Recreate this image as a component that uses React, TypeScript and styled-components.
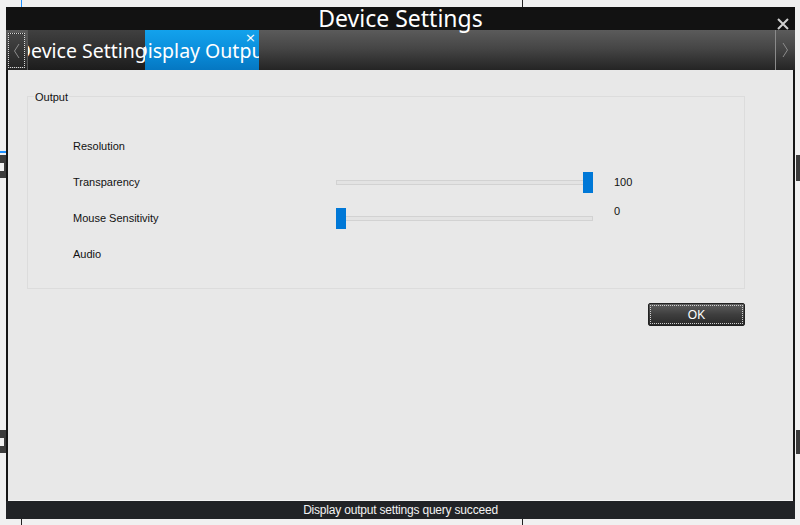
import styled, { createGlobalStyle } from 'styled-components'

const GlobalStyle = createGlobalStyle`
  html, body {
    margin: 0;
    padding: 0;
    background: #f0f0f0;
  }
`

// 창 뒤에 깔린 바탕
const Desktop = styled.div`
  position: relative;
  width: 800px;
  height: 525px;
  box-sizing: border-box;
  padding: 7px 5px 6px 6px;
  background: #f0f0f0;
  overflow: hidden;
  font-family: 'Liberation Sans', Arial, sans-serif;
`

// 뒤쪽 창의 조각들 (가장자리에 살짝 보임)
const Edge = styled.div<{ $x: number; $y: number; $w: number; $h: number; $c: string }>`
  position: absolute;
  left: ${(p) => p.$x}px;
  top: ${(p) => p.$y}px;
  width: ${(p) => p.$w}px;
  height: ${(p) => p.$h}px;
  background: ${(p) => p.$c};
`

const SideTab = styled.div<{ $y: number }>`
  position: absolute;
  left: 0;
  top: ${(p) => p.$y}px;
  width: 6px;
  height: 23px;
  background: #3c3c3c;
  display: flex;
  align-items: center;
  &::after {
    content: '';
    width: 4px;
    height: 8px;
    background: #f2f2f2;
  }
`

const Window = styled.div`
  position: relative;
  height: 512px;
  display: flex;
  flex-direction: column;
  background: #161616;
`

const TitleBar = styled.div`
  height: 23px;
  flex-shrink: 0;
  position: relative;
  display: flex;
  justify-content: center;
  align-items: flex-end;
  background: #121212;
  color: #fff;
  font-family: 'Noto Sans', 'Open Sans', sans-serif;
  font-size: 23px;
  line-height: 23px;
`

const CloseButton = styled.div`
  position: absolute;
  right: 5px;
  top: 4px;
  width: 14px;
  height: 14px;
`

const TabBar = styled.div`
  height: 40px;
  flex-shrink: 0;
  display: flex;
  background: linear-gradient(#5b5b5b, #464646 45%, #242424);
`

const NavButton = styled.div<{ $side: 'left' | 'right' }>`
  display: flex;
  align-items: center;
  justify-content: center;
  box-sizing: border-box;
  ${(p) =>
    p.$side === 'left'
      ? `
    margin: 3px 0 2px 2px;
    width: 17px;
    border: 1px dotted #d8d8d8;
    background: linear-gradient(#454545, #262626);
  `
      : `
    border-left: 1px solid #8a8a8a;
    width: 20px;
  `}
`

const Tab = styled.div<{ $active?: boolean }>`
  position: relative;
  width: ${(p) => (p.$active ? 114 : 117)}px;
  margin-left: ${(p) => (p.$active ? 0 : 2)}px;
  display: flex;
  align-items: center;
  justify-content: center;
  overflow: hidden;
  white-space: nowrap;
  color: #fff;
  font-family: 'Noto Sans', 'Open Sans', sans-serif;
  font-size: 19.5px;
  background: ${(p) =>
    p.$active
      ? 'linear-gradient(#13a2ec, #0a8fdc 50%, #0577c2)'
      : 'linear-gradient(#404040, #2f2f2f 50%, #1c1c1c)'};
  border-left: ${(p) => (p.$active ? 'none' : '1px solid #555')};
`

const TabClose = styled.span`
  position: absolute;
  top: 1px;
  right: 3px;
  font-size: 13px;
  line-height: 13px;
  font-family: 'DejaVu Sans', sans-serif;
`

const Filler = styled.div`
  flex: 1;
`

const Content = styled.div`
  flex: 1;
  display: flex;
  flex-direction: column;
  align-items: flex-start;
  margin: 0 2px 0 2px;
  padding: 26px 0 0 19px;
  background: #e8e8e8;
  border-bottom: 1px solid #f4f4f4;
`

const GroupBox = styled.fieldset`
  position: relative;
  width: 718px;
  height: 193px;
  box-sizing: border-box;
  margin: 0;
  padding: 31px 0 0 45px;
  border: 1px solid #dcdcdc;
  display: grid;
  grid-template-columns: 242px 257px auto;
  grid-auto-rows: 36px;
  column-gap: 21px;
  align-content: start;
`

const GroupTitle = styled.legend`
  position: absolute;
  top: -6px;
  left: 6px;
  padding: 0 1px;
  background: #e8e8e8;
  font-size: 11px;
  color: #111;
`

const Label = styled.div`
  display: flex;
  align-items: center;
  font-size: 11px;
  color: #111;
`

const SliderCell = styled.div`
  position: relative;
  display: flex;
  align-items: center;
`

const Track = styled.div`
  width: 100%;
  height: 5px;
  box-sizing: border-box;
  background: #e3e3e3;
  border: 1px solid #d2d2d2;
`

const Thumb = styled.div`
  position: absolute;
  top: 50%;
  width: 10px;
  height: 21px;
  margin-top: -10px;
  background: #0078d7;
`

const Value = styled.div<{ $lift?: number }>`
  display: flex;
  align-items: center;
  font-size: 11px;
  color: #111;
  position: relative;
  top: ${(p) => -(p.$lift || 0)}px;
`

const Empty = styled.div``

const ButtonRow = styled.div`
  width: 718px;
  display: flex;
  justify-content: flex-end;
  margin-top: 14px;
`

const OkButton = styled.button`
  width: 97px;
  height: 23px;
  padding: 0;
  border: 1px solid #222;
  border-radius: 2px;
  background: linear-gradient(#5e5e5e, #3e3e3e 50%, #2a2a2a);
  color: #fff;
  font-family: 'Liberation Sans', Arial, sans-serif;
  font-size: 12px;
  outline: 1px dotted #d0d0d0;
  outline-offset: -3px;
`

const StatusBar = styled.div`
  height: 18px;
  flex-shrink: 0;
  display: flex;
  align-items: center;
  justify-content: center;
  background: #212326;
  color: #f2f2f2;
  font-size: 12px;
  letter-spacing: -0.2px;
`

type Row = { label: string; value?: number; lift?: number }

const rows: Row[] = [
  { label: 'Resolution' },
  { label: 'Transparency', value: 100 },
  { label: 'Mouse Sensitivity', value: 0, lift: 7 },
  { label: 'Audio' },
]

function Chevron({ dir }: { dir: 'left' | 'right' }) {
  return (
    <svg width="7" height="16" viewBox="0 0 7 16">
      <path
        d={dir === 'left' ? 'M6 1 L1.5 8 L6 15' : 'M1 1 L5.5 8 L1 15'}
        fill="none"
        stroke="#8c8c8c"
        strokeWidth="1"
      />
    </svg>
  )
}

function App() {
  return (
    <>
      <GlobalStyle />
      <Desktop>
        <Edge $x={21} $y={0} $w={1} $h={7} $c="#1e90ff" />
        <Edge $x={522} $y={0} $w={1} $h={7} $c="#222" />
        <Edge $x={21} $y={519} $w={1} $h={6} $c="#222" />
        <Edge $x={522} $y={519} $w={1} $h={6} $c="#222" />
        <Edge $x={0} $y={151} $w={6} $h={2} $c="#1e90ff" />
        <SideTab $y={155} />
        <SideTab $y={430} />
        <Edge $x={796} $y={155} $w={4} $h={26} $c="#3c3c3c" />
        <Edge $x={796} $y={430} $w={4} $h={24} $c="#3c3c3c" />
        <Window>
          <TitleBar>
            <span>Device Settings</span>
            <CloseButton>
              <svg width="14" height="14" viewBox="0 0 14 14">
                <path d="M2 2 L12 12 M12 2 L2 12" stroke="#cfcfcf" strokeWidth="2" />
              </svg>
            </CloseButton>
          </TitleBar>
          <TabBar>
            <NavButton $side="left">
              <Chevron dir="left" />
            </NavButton>
            <Tab>Device Settings</Tab>
            <Tab $active>
              Display Output
              <TabClose>×</TabClose>
            </Tab>
            <Filler />
            <NavButton $side="right">
              <Chevron dir="right" />
            </NavButton>
          </TabBar>
          <Content>
            <GroupBox>
              <GroupTitle>Output</GroupTitle>
              {rows.map((row) => (
                <>
                  <Label key={row.label}>{row.label}</Label>
                  {row.value === undefined ? (
                    <>
                      <Empty />
                      <Empty />
                    </>
                  ) : (
                    <>
                      <SliderCell>
                        <Track />
                        <Thumb style={{ left: `${(row.value / 100) * 247}px` }} />
                      </SliderCell>
                      <Value $lift={row.lift}>{row.value}</Value>
                    </>
                  )}
                </>
              ))}
            </GroupBox>
            <ButtonRow>
              <OkButton>OK</OkButton>
            </ButtonRow>
          </Content>
          <StatusBar>Display output settings query succeed</StatusBar>
        </Window>
      </Desktop>
    </>
  )
}

export default App
